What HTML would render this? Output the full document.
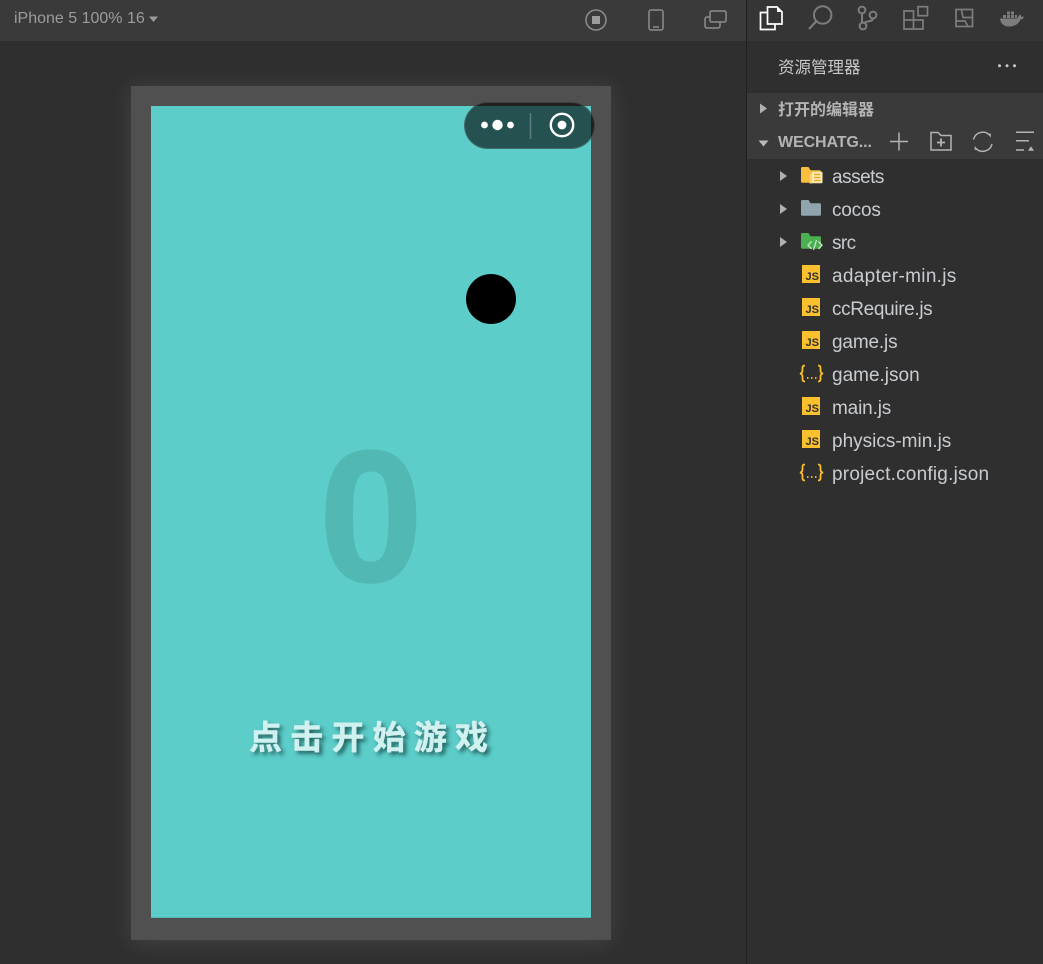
<!DOCTYPE html>
<html lang="zh"><head><meta charset="utf-8"><title>WeChat DevTools</title>
<style>
html,body{margin:0;padding:0;background:#2f2f2f}
#r{position:relative;width:1043px;height:964px;overflow:hidden;background:#2f2f2f;font-family:"Liberation Sans","Noto Sans CJK SC",sans-serif}
#r div,#r svg{position:absolute}
.t{color:#c8ccd0;font-size:19px;line-height:24px;left:832px;white-space:nowrap}
.bar{background:#3a3a3a}
.js{left:802px;width:18px;height:18px;background:#fbc02d;color:#2f2f2f;font-size:11px;font-weight:bold;line-height:10px}
.js span{position:absolute;right:1px;bottom:1px}
</style></head><body>
<div id="r">
<div class="bar" style="left:0;top:0;width:746px;height:41px"></div>
<div style="left:14px;top:9px;font-size:16px;line-height:20px;color:#9c9c9c;white-space:nowrap">iPhone 5 100% 16</div>
<svg style="left:149px;top:16px" width="10" height="7"><path d="M0 0.500H9L4.500 6z" fill="#9a9a9a"/></svg>
<svg style="left:580px;top:5px" width="160" height="28" fill="none" stroke="#8c8c8c" stroke-width="1.500">
<circle cx="16" cy="15" r="10"/><rect x="12" y="11" width="8" height="8" fill="#9c9c9c" stroke="none"/>
<rect x="69" y="5" width="14" height="20" rx="2"/><path d="M73 22h6"/>
<rect x="130" y="6" width="16" height="11" rx="1.500"/><path d="M130 12h-3a2 2 0 0 0-2 2v7a2 2 0 0 0 2 2h11a2 2 0 0 0 2-2v-4"/>
</svg>

<div style="left:131px;top:86px;width:480px;height:854px;background:#505050;box-shadow:0 2px 22px rgba(255,255,255,.11)"></div>
<div style="left:151px;top:106px;width:440px;height:812px;background:#5ccdc9"></div>
<div style="left:151px;top:917px;width:440px;height:1px;background:#55b5b1"></div>
<div style="left:491px;top:274px;width:50px;height:50px;margin-left:-25px;border-radius:50%;background:#000"></div>
<div style="left:151px;width:440px;top:397px;text-align:center;font-size:187px;line-height:240px;font-weight:bold;color:#52b8b3;-webkit-text-stroke:2px #52b8b3">0</div>
<div style="left:249px;top:717px;font-size:33px;line-height:42px;font-weight:bold;letter-spacing:8.200px;color:#d0f1f0;white-space:nowrap;-webkit-text-stroke:.5px #d0f1f0;text-shadow:3px 3px 4px #1f5a57;filter:blur(.35px)">点击开始游戏</div>

<div style="left:464px;top:102px;width:131px;height:47px;box-sizing:border-box;border-radius:24px;background:rgba(0,0,0,.6);border:1px solid rgba(255,255,255,.14)"></div>
<svg style="left:464px;top:102px" width="131" height="47">
<circle cx="20.500" cy="23" r="3.400" fill="#fff"/><circle cx="33.500" cy="23" r="5.200" fill="#fff"/><circle cx="46.500" cy="23" r="3.400" fill="#fff"/>
<path d="M66.500 11v26" stroke="#5d7f7d" stroke-width="1.500"/>
<circle cx="98" cy="23" r="11.200" fill="none" stroke="#fff" stroke-width="2.400"/><circle cx="98" cy="23" r="4.400" fill="#fff"/>
</svg>

<div style="left:746px;top:0;width:1px;height:964px;background:#1f1f1f"></div>
<div style="left:747px;top:0;width:296px;height:41px;background:#353535"></div>
<svg style="left:747px;top:0" width="296" height="41" fill="none" stroke="#7d7d7d" stroke-width="2">
<path d="M20 12.500h-6.500v17h14.500v-5.500" stroke="#fff" stroke-width="1.700"/>
<path d="M20.500 7h9.500l5 5v12H20.500z" stroke="#fff" stroke-width="1.700"/><path d="M30 7l5 5h-5z" fill="#fff" stroke="none"/>
<circle cx="75.700" cy="15" r="8.700"/><path d="M69.500 21L62 29" stroke-width="2.200"/>
<circle cx="115" cy="10" r="3.400"/><circle cx="116" cy="26" r="3.400"/><circle cx="126" cy="15" r="3.400"/>
<path d="M115 13.500v9M126 18.500c0 3-6 2.500-9.500 4.500"/>
<path d="M157 11h9.500v9H157zM157 20h9.500v9H157zM166.500 20h9.500v9h-9.500z" stroke-width="1.700"/><rect x="171" y="6.700" width="9.500" height="9" stroke-width="1.700"/>
<rect x="209" y="9.500" width="16.500" height="17" stroke-width="1.700"/><path d="M214.500 10l1.500 7.500h9M209 21h9l3 5.500" stroke-width="1.700"/>
<path d="M253 18.500h17.500c.5-2 1.500-3.500 2.500-4c1 1 1.500 2 1.500 2.500c1-.5 2-.5 2.500 0c-.5 1.500-2 2.500-3.500 2.500c-2 5-6.500 7-11 7c-6 0-9-3-9.500-8z" fill="#7d7d7d" stroke="none"/>
<path d="M256 15h3v3h-3zM260 15h3v3h-3zM264 15h3v3h-3zM268 15h2v3h-2zM260 11.500h3v3h-3zM264 11.500h3v3h-3z" fill="#7d7d7d" stroke="none"/>
</svg>
<div style="left:778px;top:57px;font-size:16.500px;line-height:22px;color:#c8c8c8;white-space:nowrap">资源管理器</div>
<svg style="left:996px;top:61px" width="24" height="10"><g fill="#c8c8c8"><circle cx="3.500" cy="4.700" r="1.500"/><circle cx="11" cy="4.700" r="1.500"/><circle cx="18.500" cy="4.700" r="1.500"/></g></svg>

<div class="bar" style="left:747px;top:93px;width:296px;height:66px"></div>
<svg style="left:759px;top:103px" width="10" height="12"><path d="M1 0.500L8 5.500L1 10.500z" fill="#b0b0b0"/></svg>
<div style="left:778px;top:100px;font-size:16px;line-height:22px;font-weight:bold;color:#b4b4b4;white-space:nowrap">打开的编辑器</div>
<svg style="left:758px;top:140px" width="12" height="9"><path d="M0.500 0.500H10.500L5.500 6.500z" fill="#b8b8b8"/></svg>
<div style="left:778px;top:132px;font-size:16px;line-height:22px;font-weight:bold;color:#b4b4b4;white-space:nowrap;letter-spacing:-.1px">WECHATG...</div>
<svg style="left:885px;top:128px" width="158" height="28" fill="none" stroke="#b4b4b4" stroke-width="1.500">
<path d="M14 4.500v18M5 13.500h18"/>
<path d="M46 4.500h7l3 3h10v14.500H46z"/><path d="M56 10.500v8M52 14.500h8" stroke-width="1.800"/>
<path d="M88.500 11.500A9.500 9.500 0 0 1 104.500 7M107 16A9.500 9.500 0 0 1 91 20.500"/><path d="M102.500 5.500l3.500.3-.3 3.700zM93 22l-3.500-.3.3-3.700z" fill="#b4b4b4" stroke="none"/>
<path d="M131 4.300h18M131 12.700h13M131 22h8"/><path d="M143 22.700l3-4.500 3 4.500z" fill="#b4b4b4" stroke="none"/>
</svg>

<svg style="left:779px;top:170px" width="9" height="80" fill="#b0b0b0"><path d="M1 1L8 6L1 11zM1 34L8 39L1 44zM1 67L8 72L1 77z"/></svg>

<svg style="left:801px;top:166px" width="24" height="24"><path d="M0 2.500a1.500 1.500 0 0 1 1.500-1.500H7.500L9.500 4.300H18.500a1.500 1.500 0 0 1 1.500 1.500V15.200a1.500 1.500 0 0 1-1.500 1.500H1.500a1.500 1.500 0 0 1-1.500-1.500z" fill="#f9be3c"/><rect x="8.500" y="8" width="3" height="9.500" fill="#fbd36e"/><rect x="11" y="5.800" width="10.500" height="11.500" rx="1" fill="#fde9b0"/><path d="M13 8.500h6.500M13 11.500h6.500M13 14.500h6.500" stroke="#e5a520" stroke-width="1.300"/></svg>
<svg style="left:801px;top:199px" width="24" height="24"><path d="M0 2.500a1.500 1.500 0 0 1 1.500-1.500H7.500L9.500 4.300H18.500a1.500 1.500 0 0 1 1.500 1.500V15.200a1.500 1.500 0 0 1-1.500 1.500H1.500a1.500 1.500 0 0 1-1.500-1.500z" fill="#90a4ae"/></svg>
<svg style="left:801px;top:232px" width="24" height="24"><path d="M0 2.500a1.500 1.500 0 0 1 1.500-1.500H7.500L9.500 4.300H18.500a1.500 1.500 0 0 1 1.500 1.500V15.200a1.500 1.500 0 0 1-1.500 1.500H1.500a1.500 1.500 0 0 1-1.500-1.500z" fill="#4caf50"/><path d="M10.500 9.500l-3.500 3.700 3.500 3.700M17.500 9.500l3.500 3.700-3.500 3.700M15.500 8l-3 10" fill="none" stroke="#c8e6c9" stroke-width="1.300"/></svg>

<div class="t" style="top:166px;letter-spacing:-.5px">assets</div>
<div class="t" style="top:199px;letter-spacing:-.2px">cocos</div>
<div class="t" style="top:232px;letter-spacing:-.6px">src</div>
<div class="t" style="top:265px;letter-spacing:.3px">adapter-min.js</div>
<div class="t" style="top:298px;letter-spacing:-.35px">ccRequire.js</div>
<div class="t" style="top:331px;letter-spacing:-.15px">game.js</div>
<div class="t" style="top:364px">game.json</div>
<div class="t" style="top:397px;letter-spacing:-.15px">main.js</div>
<div class="t" style="top:430px">physics-min.js</div>
<div class="t" style="top:463px;letter-spacing:.22px">project.config.json</div>

<div class="js" style="top:265px"><span>JS</span></div>
<div class="js" style="top:298px"><span>JS</span></div>
<div class="js" style="top:331px"><span>JS</span></div>
<div class="js" style="top:397px"><span>JS</span></div>
<div class="js" style="top:430px"><span>JS</span></div>

<svg style="left:799px;top:364px" width="25" height="20" fill="none" stroke="#fbc02d" stroke-width="1.800"><path d="M6 1.500c-3 0-2.500 2-2.500 4s0 3.500-2.500 4c2.500.5 2.500 2 2.500 4s-.5 4 2.500 4M19 1.500c3 0 2.500 2 2.500 4s0 3.500 2.500 4c-2.500.5-2.500 2-2.500 4s.5 4-2.500 4"/><path d="M8 14h1.500M12 14h1.500M16 14h1.500" stroke-width="1.800"/></svg>
<svg style="left:799px;top:463px" width="25" height="20" fill="none" stroke="#fbc02d" stroke-width="1.800"><path d="M6 1.500c-3 0-2.500 2-2.500 4s0 3.500-2.500 4c2.500.5 2.500 2 2.500 4s-.5 4 2.500 4M19 1.500c3 0 2.500 2 2.500 4s0 3.500 2.500 4c-2.500.5-2.500 2-2.500 4s.5 4-2.500 4"/><path d="M8 14h1.500M12 14h1.500M16 14h1.500" stroke-width="1.800"/></svg>
</div>
</body></html>
